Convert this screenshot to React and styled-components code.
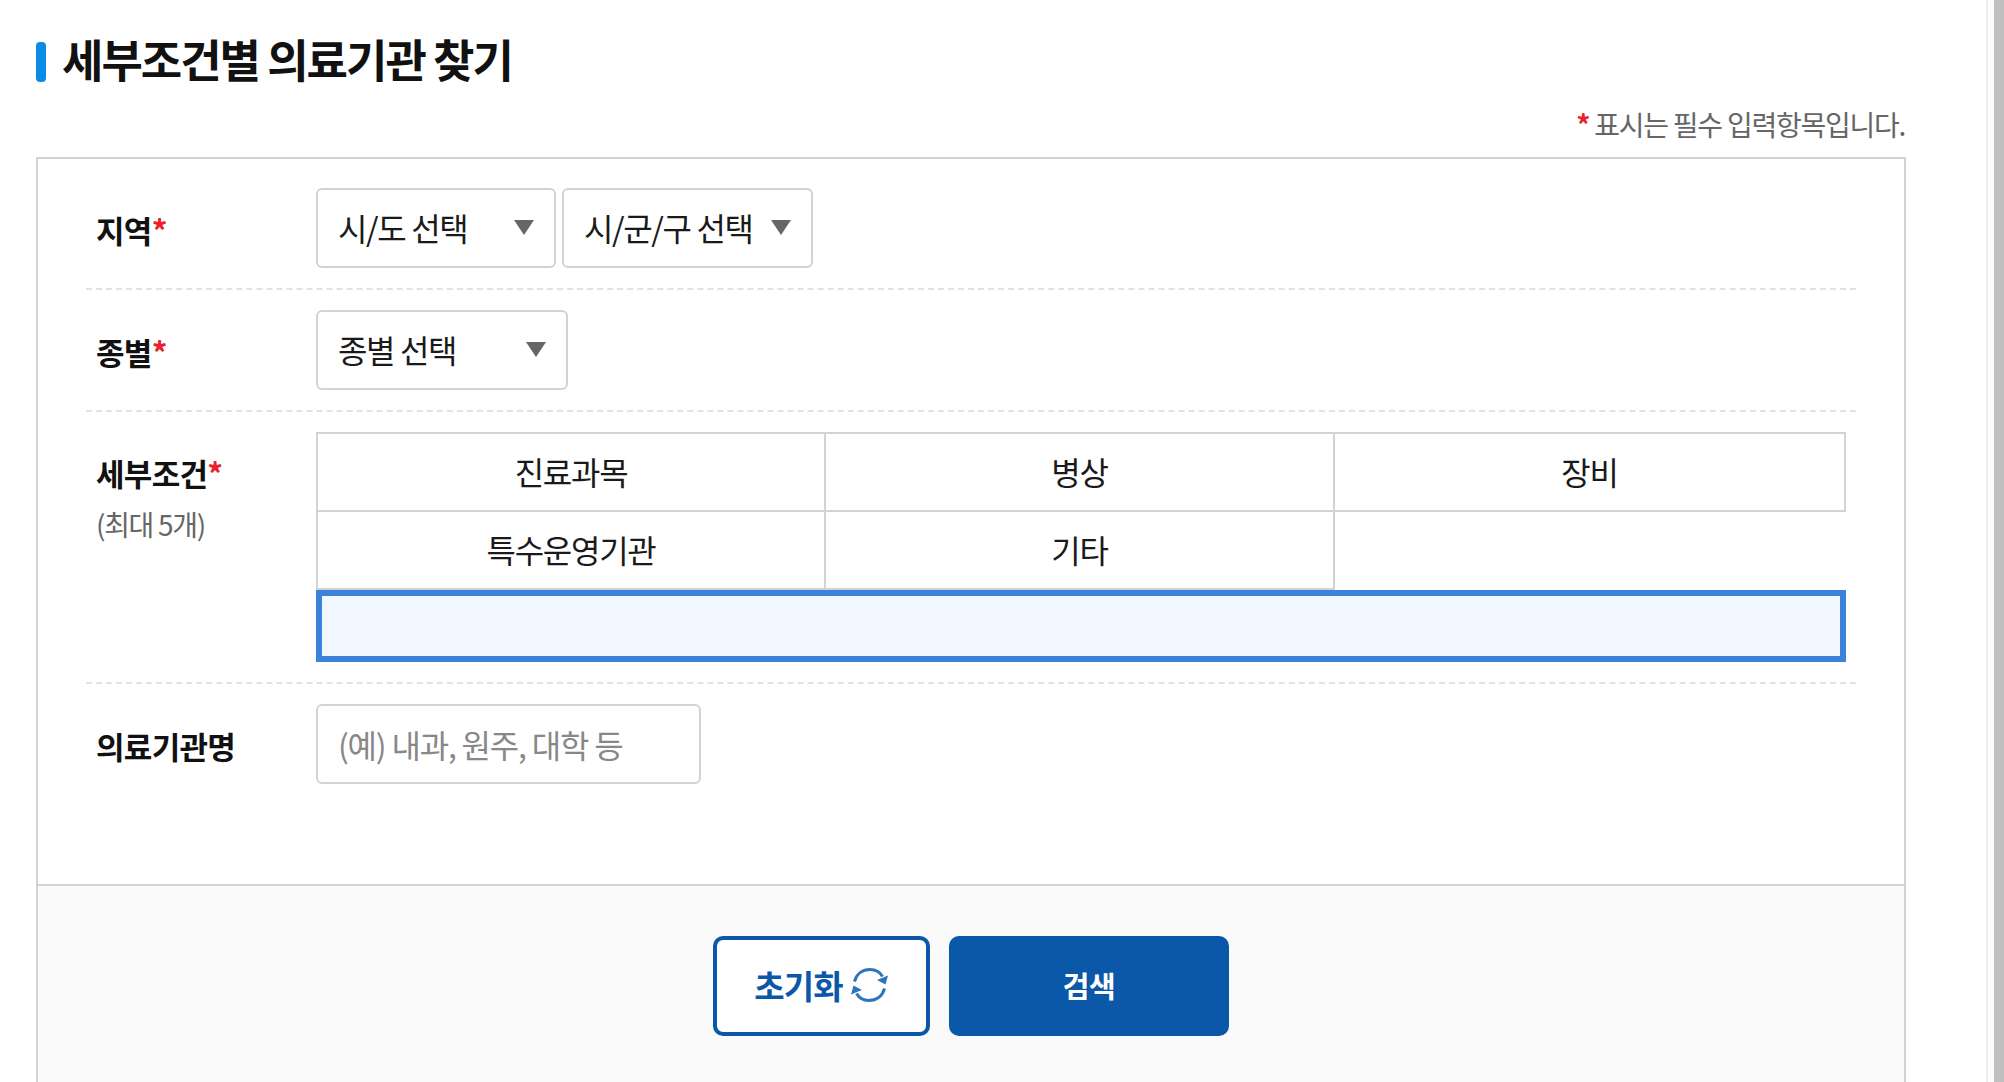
import styled, { createGlobalStyle } from "styled-components"

const GlobalStyle = createGlobalStyle`
  html, body {
    margin: 0;
    padding: 0;
    height: 100%;
    background: #fff;
    overflow: hidden;
  }
  * {
    box-sizing: border-box;
  }
`

const BLUE = "#0b58a8"
const LINE = "#d3d3d3"
const FONT = `"Noto Sans CJK KR", "Noto Sans", sans-serif`

const Page = styled.div`
  display: flex;
  height: 1082px;
  overflow: hidden;
  font-family: ${FONT};
  color: #111;
`

const Main = styled.main`
  flex: 1;
  min-width: 0;
  padding: 0 80px 0 36px;
`

const ScrollTrack = styled.div`
  width: 18px;
  display: flex;
  justify-content: flex-end;
  border-left: 2px solid #eeeeee;
  background: #fcfcfc;
`

const ScrollThumb = styled.div`
  width: 10px;
  background: #c0c0c0;
`

const Title = styled.h2`
  display: flex;
  align-items: center;
  gap: 16px;
  margin: 42px 0 0;
  height: 40px;
  font-size: 45px;
  line-height: 32px;
  font-weight: 700;
  letter-spacing: -2px;
  color: #111;
  white-space: nowrap;
  &::before {
    content: "";
    width: 10px;
    height: 40px;
    border-radius: 4px;
    background: #0a8ce6;
  }
`

const TitleText = styled.span`
  padding-bottom: 6px;
`

const Note = styled.p`
  margin: 22px 0 0;
  height: 53px;
  padding-right: 1px;
  line-height: 40px;
  text-align: right;
  font-size: 28px;
  letter-spacing: -1.25px;
  color: #666;
`

const Star = styled.span`
  color: #e8212b;
  font-weight: 700;
`

const FormBox = styled.section`
  border: 2px solid ${LINE};
  border-bottom: 0;
`

const Rows = styled.div`
  padding: 9px 48px 80px;
`

const Row = styled.div`
  display: grid;
  grid-template-columns: 230px 1fr;
  padding: 20px 10px 20px 0;
  border-top: 2px dashed #e2e2e2;
  &:first-child {
    border-top: 0;
  }
`

const Label = styled.div`
  padding: ${(p) => p.$top || 20}px 0 0 10px;
  font-size: 31px;
  line-height: 44px;
  font-weight: 700;
  letter-spacing: -0.7px;
  color: #111;
`

const SubLabel = styled.div`
  margin-top: 9px;
  font-size: 28px;
  line-height: 40px;
  font-weight: 400;
  letter-spacing: -1.3px;
  color: #666;
`

const Controls = styled.div`
  display: flex;
  gap: 6px;
`

const SelectWrap = styled.div`
  position: relative;
  width: ${(p) => p.$width}px;
  height: 80px;
  &::after {
    content: "";
    position: absolute;
    right: 22px;
    top: 32px;
    border-style: solid;
    border-width: 15px 10px 0;
    border-color: #666 transparent transparent;
    pointer-events: none;
  }
`

const Select = styled.select`
  appearance: none;
  width: 100%;
  height: 100%;
  padding: 0 0 2px 20px;
  border: 2px solid ${LINE};
  border-radius: 6px;
  background: #fff;
  font-family: ${FONT};
  font-size: 32px;
  letter-spacing: -1.35px;
  color: #1a1a1a;
  outline: none;
`

const CategoryGrid = styled.div`
  display: grid;
  grid-template-columns: 508px 509px 1fr;
  border-top: 2px solid ${LINE};
  border-left: 2px solid ${LINE};
`

const Category = styled.div`
  height: 78px;
  padding-bottom: 2px;
  display: flex;
  align-items: center;
  justify-content: center;
  border-right: 2px solid ${LINE};
  border-bottom: 2px solid ${LINE};
  font-size: 32px;
  letter-spacing: -1.3px;
  color: #1a1a1a;
`

const BlankCategory = styled.div`
  height: 78px;
`

const FocusInput = styled.input`
  display: block;
  width: 100%;
  height: 72px;
  border: 6px solid #3b82db;
  background: #f0f7ff;
  outline: none;
`

const NameInput = styled.input`
  width: 385px;
  height: 80px;
  padding: 0 20px;
  border: 2px solid ${LINE};
  border-radius: 6px;
  background: #fff;
  font-family: ${FONT};
  font-size: 32px;
  letter-spacing: -1.2px;
  outline: none;
  &::placeholder {
    color: #888;
    opacity: 1;
  }
`

const Footer = styled.div`
  display: flex;
  justify-content: center;
  gap: 19px;
  padding: 50px 0 60px;
  border-top: 2px solid ${LINE};
  background: #fafafa;
`

const Button = styled.button`
  display: flex;
  align-items: center;
  justify-content: center;
  gap: 7px;
  width: ${(p) => (p.$primary ? 280 : 217)}px;
  height: 100px;
  padding: 0 0 3px;
  border: 4px solid ${BLUE};
  border-radius: 10px;
  background: ${(p) => (p.$primary ? BLUE : "#fff")};
  color: ${(p) => (p.$primary ? "#fff" : BLUE)};
  font-family: ${FONT};
  font-size: ${(p) => (p.$primary ? 29 : 33)}px;
  font-weight: 700;
  letter-spacing: ${(p) => (p.$primary ? "-0.5px" : "-0.8px")};
`

function RefreshIcon() {
  return (
    <svg width="39" height="36" viewBox="0 0 38 36" fill="none">
      <path d="M4 14.500C6 7 12 2.500 19.500 2.500c5.500 0 10 2.600 12.500 7" stroke="#2f74bb" strokeWidth="3" />
      <path d="M34 21.500C32 29 26 33.500 18.500 33.500c-5.500 0-10-2.600-12.500-7" stroke="#2f74bb" strokeWidth="3" />
      <path d="M37.500 8.500 35 17.500l-8.500-4.500z" fill="#2f74bb" />
      <path d="M.5 27.500 3 18.500l8.500 4.500z" fill="#2f74bb" />
    </svg>
  )
}

function Dropdown({ width, text }) {
  return (
    <SelectWrap $width={width}>
      <Select defaultValue={text}>
        <option>{text}</option>
      </Select>
    </SelectWrap>
  )
}

export default function App() {
  return (
    <Page>
      <GlobalStyle />
      <Main>
        <Title><TitleText>세부조건별 의료기관 찾기</TitleText></Title>
        <Note><Star>*</Star> 표시는 필수 입력항목입니다.</Note>
        <FormBox>
          <Rows>
            <Row>
              <Label>지역<Star>*</Star></Label>
              <Controls>
                <Dropdown width={240} text="시/도 선택" />
                <Dropdown width={251} text="시/군/구 선택" />
              </Controls>
            </Row>
            <Row>
              <Label>종별<Star>*</Star></Label>
              <Controls>
                <Dropdown width={252} text="종별 선택" />
              </Controls>
            </Row>
            <Row>
              <Label $top={19}>
                세부조건<Star>*</Star>
                <SubLabel>(최대 5개)</SubLabel>
              </Label>
              <div>
                <CategoryGrid>
                  <Category>진료과목</Category>
                  <Category>병상</Category>
                  <Category>장비</Category>
                  <Category>특수운영기관</Category>
                  <Category>기타</Category>
                  <BlankCategory />
                </CategoryGrid>
                <FocusInput type="text" />
              </div>
            </Row>
            <Row>
              <Label>의료기관명</Label>
              <Controls>
                <NameInput type="text" placeholder="(예) 내과, 원주, 대학 등" />
              </Controls>
            </Row>
          </Rows>
          <Footer>
            <Button type="button">초기화<RefreshIcon /></Button>
            <Button type="button" $primary>검색</Button>
          </Footer>
        </FormBox>
      </Main>
      <ScrollTrack>
        <ScrollThumb />
      </ScrollTrack>
    </Page>
  )
}
